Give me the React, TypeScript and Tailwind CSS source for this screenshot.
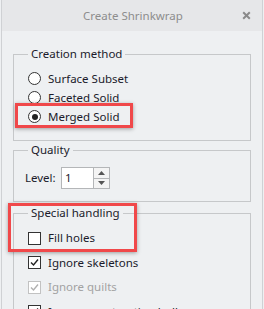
import React from "react";

const Radio = ({ checked, label }: { checked?: boolean; label: string }) => (
  <div className="flex items-center h-[19px]">
    <span className="w-[13px] h-[13px] rounded-full border border-[#333] bg-white flex items-center justify-center">
      {checked && <span className="w-[6px] h-[6px] rounded-full bg-[#222]" />}
    </span>
    <span className="ml-[7px]">{label}</span>
  </div>
);

const Check = ({ checked, disabled, label }: { checked?: boolean; disabled?: boolean; label: string }) => (
  <div className={`flex items-center h-[24.5px] ${disabled ? "text-[#a2a2a2]" : ""}`}>
    <span
      className={`w-[13px] h-[13px] border bg-white flex items-center justify-center ${
        disabled ? "border-[#c2c2c2]" : "border-[#333]"
      }`}
    >
      {checked && (
        <svg width="9" height="9" viewBox="0 0 9 9">
          <path d="M1 4.5 L3.5 7 L8 1.5" fill="none" stroke={disabled ? "#b0b0b0" : "#222"} strokeWidth="1.4" />
        </svg>
      )}
    </span>
    <span className="ml-[7px]">{label}</span>
  </div>
);

export default function App() {
  return (
    <div
      className="w-[264px] h-[309px] overflow-hidden bg-[#eef0f2] text-[11.5px] leading-[16px] text-[#1b1b2b] relative"
      style={{ fontFamily: '"Noto Sans", "Open Sans", sans-serif' }}
    >
      <div className="ml-[1px] w-[262px] h-full border-x border-[#cfd1d4]">
        {/* title bar */}
        <div className="h-[31px] bg-[#e6e7e9] flex items-center relative">
          <div className="flex-1 text-center text-[11.5px] text-[#8d8d8d] pl-[2px]">Create Shrinkwrap</div>
          <div className="absolute right-[11px] top-[11px]">
            <svg width="9" height="9" viewBox="0 0 9 9">
              <path d="M1.2 1.2 L7.8 7.8 M7.8 1.2 L1.2 7.8" stroke="#8a8a8a" strokeWidth="2" />
            </svg>
          </div>
        </div>

        <div className="pt-[15px] px-[11px] flex flex-col">
          <fieldset className="h-[95px] border border-[#c6c8ca] pl-[14px]">
            <legend className="px-[3px]">Creation method</legend>
            <div className="pt-[7px] flex flex-col">
              <Radio label="Surface Subset" />
              <Radio label="Faceted Solid" />
              <Radio checked label="Merged Solid" />
            </div>
          </fieldset>

          <fieldset className="mt-[1px] h-[60px] border border-[#c6c8ca] pl-[11px]">
            <legend className="ml-[3px] px-[3px]">Quality</legend>
            <div className="pt-[9px] flex items-center">
              <span className="w-[36px]">Level:</span>
              <div className="flex h-[22px] border border-[#b4b6b8] bg-white">
                <div className="w-[31px] pl-[3px] flex items-center">1</div>
                <div className="w-[16px] flex flex-col border-l border-[#b4b6b8] bg-[#f4f4f4]">
                  <div className="flex-1 flex items-center justify-center border-b border-[#b4b6b8]">
                    <svg width="7" height="4" viewBox="0 0 7 4"><path d="M0 4 L3.5 0 L7 4 Z" fill="#555" /></svg>
                  </div>
                  <div className="flex-1 flex items-center justify-center">
                    <svg width="7" height="4" viewBox="0 0 7 4"><path d="M0 0 L3.5 4 L7 0 Z" fill="#555" /></svg>
                  </div>
                </div>
              </div>
            </div>
          </fieldset>

          <fieldset className="mt-[3px] h-[120px] border border-[#c6c8ca] pl-[14px]">
            <legend className="px-[3px]">Special handling</legend>
            <div className="pt-[5px] flex flex-col">
              <Check label="Fill holes" />
              <Check checked label="Ignore skeletons" />
              <Check checked disabled label="Ignore quilts" />
              <Check checked label="Ignore construction hulls" />
            </div>
          </fieldset>
        </div>
      </div>

      {/* highlight boxes */}
      <div className="absolute left-[15px] top-[103px] w-[118px] h-[25px] border-[3px] border-[#f0484a] shadow-[0_1px_4px_rgba(0,0,0,0.35)]" />
      <div className="absolute left-[8px] top-[203px] w-[129px] h-[49px] border-[3px] border-[#f0484a] shadow-[0_1px_4px_rgba(0,0,0,0.35)]" />
    </div>
  );
}
